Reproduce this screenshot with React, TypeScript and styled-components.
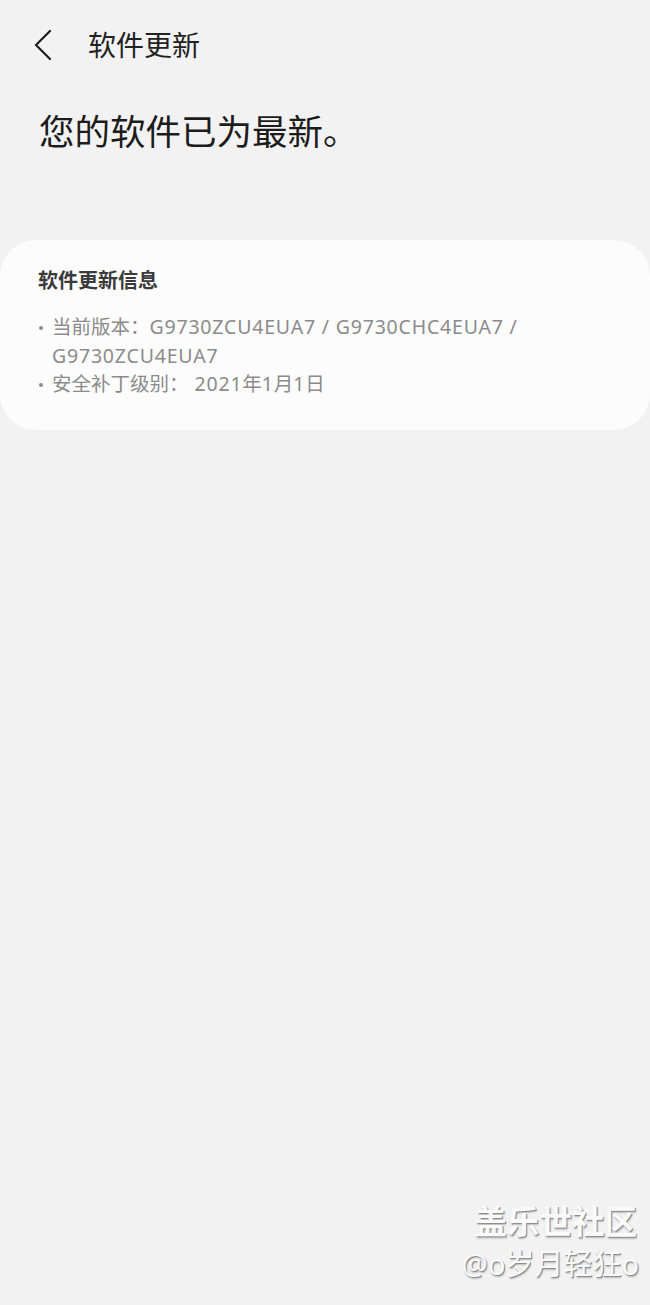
import React from "react";
import styled, { createGlobalStyle } from "styled-components";

const GlobalStyle = createGlobalStyle`
  html, body {
    margin: 0;
    padding: 0;
    background: #f2f2f2;
  }
  body {
    font-family: "Noto Sans", "Noto Sans CJK SC", sans-serif;
    -webkit-font-smoothing: antialiased;
  }
`;

const Page = styled.div`
  position: relative;
  min-height: 1305px;
  background: #f2f2f2;
  display: flex;
  flex-direction: column;
`;

const Header = styled.header`
  height: 90px;
  display: flex;
  align-items: center;
  padding-left: 33px;
  gap: 35px;
`;

const BackButton = styled.button`
  width: 20px;
  height: 32px;
  padding: 0;
  border: none;
  background: none;
  color: #1e1e1e;
  display: flex;
  align-items: center;
  justify-content: center;
`;

const Title = styled.h1`
  margin: 0;
  font-size: 28px;
  font-weight: 400;
  color: #222;
  line-height: 32px;
`;

const Heading = styled.h2`
  margin: 19px 0 0;
  padding-left: 39px;
  font-size: 35.5px;
  font-weight: 400;
  line-height: 44px;
  color: #1c1c1c;
`;

const Card = styled.section`
  margin-top: 87px;
  background: #fcfcfc;
  border-radius: 36px;
  padding: 27px 38px 31px;
`;

const CardTitle = styled.h3`
  margin: 0 0 18px;
  font-size: 20px;
  font-weight: 700;
  line-height: 28px;
  color: #3a3a3a;
`;

const InfoList = styled.ul`
  margin: 0;
  padding: 0;
  list-style: none;
`;

const InfoItem = styled.li`
  display: flex;
  font-size: 19.5px;
  line-height: 28.5px;
  color: #8b8b8b;
`;

const Bullet = styled.span`
  flex: 0 0 14px;
  position: relative;
  &::before {
    content: "";
    position: absolute;
    left: 1px;
    top: 13px;
    width: 4px;
    height: 4px;
    border-radius: 50%;
    background: #8b8b8b;
  }
`;

const ItemText = styled.div`
  flex: 1;
`;

const Value = styled.span<{ $lead?: number }>`
  margin-left: ${(p) => p.$lead ?? 0}px;
`;

const Code = styled.span`
  letter-spacing: 0.8px;
`;

const Watermark = styled.div`
  position: absolute;
  right: 11px;
  top: 1200px;
  display: flex;
  flex-direction: column;
  align-items: flex-end;
  color: #fafafa;
  text-shadow: 1px 1px 0 #8e8e8e, 1px 2px 2px rgba(0, 0, 0, 0.25);
`;

const WatermarkMain = styled.span`
  font-size: 32.5px;
  font-weight: 700;
  line-height: 44px;
  margin-right: 2px;
`;

const WatermarkUser = styled.span`
  font-size: 29px;
  font-weight: 400;
  line-height: 40px;
`;

const ChevronLeft: React.FC = () => (
  <svg width="18" height="30" viewBox="0 0 18 30" fill="none">
    <polyline
      points="16,1 2,15 16,29"
      stroke="currentColor"
      strokeWidth="2.2"
      strokeLinecap="round"
      strokeLinejoin="round"
    />
  </svg>
);

const App: React.FC = () => {
  return (
    <>
      <GlobalStyle />
      <Page>
        <Header>
          <BackButton aria-label="返回">
            <ChevronLeft />
          </BackButton>
          <Title>软件更新</Title>
        </Header>
        <Heading>您的软件已为最新。</Heading>
        <Card>
          <CardTitle>软件更新信息</CardTitle>
          <InfoList>
            <InfoItem>
              <Bullet />
              <ItemText>
                当前版本：
                <Value>
                  <Code>G9730ZCU4EUA7 / G9730CHC4EUA7 / G9730ZCU4EUA7</Code>
                </Value>
              </ItemText>
            </InfoItem>
            <InfoItem>
              <Bullet />
              <ItemText>
                安全补丁级别：
                <Value $lead={6}>
                  <Code>2021</Code>年<Code>1</Code>月<Code>1</Code>日
                </Value>
              </ItemText>
            </InfoItem>
          </InfoList>
        </Card>
        <Watermark>
          <WatermarkMain>盖乐世社区</WatermarkMain>
          <WatermarkUser>@o岁月轻狂o</WatermarkUser>
        </Watermark>
      </Page>
    </>
  );
};

export default App;
